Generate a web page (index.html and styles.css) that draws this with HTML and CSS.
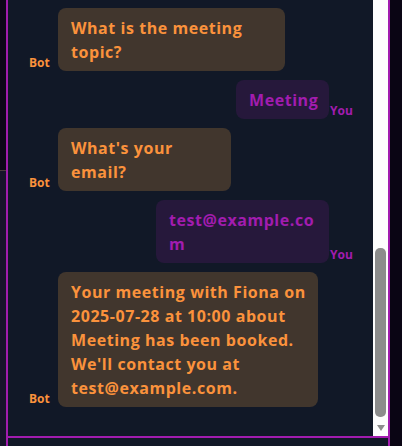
FILE: index.html
```html
<!DOCTYPE html>
<html lang="en">
<head>
<meta charset="utf-8">
<title>Chat</title>
<link rel="stylesheet" href="styles.css">
</head>
<body>
<div class="app">
  <aside class="side-left">
    <div class="side-top"></div>
    <div class="side-bottom"></div>
  </aside>
  <main class="panel">
    <div class="chat-body">
      <div class="messages">
        <div class="row row-bot">
          <span class="label label-bot">Bot</span>
          <div class="bubble bubble-bot w-topic">What is the meeting<br>topic?</div>
        </div>
        <div class="row row-you">
          <div class="bubble bubble-you w-meeting">Meeting</div>
          <span class="label label-you">You</span>
        </div>
        <div class="row row-bot">
          <span class="label label-bot">Bot</span>
          <div class="bubble bubble-bot w-email">What's your<br>email?</div>
        </div>
        <div class="row row-you">
          <div class="bubble bubble-you w-address">test@example.co<br>m</div>
          <span class="label label-you">You</span>
        </div>
        <div class="row row-bot">
          <span class="label label-bot">Bot</span>
          <div class="bubble bubble-bot w-confirm">Your meeting with Fiona on<br>2025-07-28 at 10:00 about<br>Meeting has been booked.<br>We'll contact you at<br>test@example.com.</div>
        </div>
      </div>
      <div class="scrollbar">
        <div class="thumb"></div>
        <div class="arrow"><span class="arrow-down"></span></div>
      </div>
    </div>
    <div class="composer"></div>
  </main>
  <aside class="side-right"></aside>
</div>
</body>
</html>
```

FILE: styles.css
```css
* { box-sizing: border-box; }
html, body { margin: 0; padding: 0; }
body {
  background: #0b0617;
  font-family: "Open Sans", "Noto Sans", sans-serif;
  height: 446px;
  overflow: hidden;
}
.app {
  display: flex;
  height: 446px;
}
.side-left {
  width: 6px;
  display: flex;
  flex-direction: column;
}
.side-top {
  height: 171px;
  background: #0d0719;
  border-bottom: 1px solid #4a3c3c;
}
.side-bottom {
  flex: 1;
  background: #17142b;
}
.panel {
  width: 384px;
  border-left: 2px solid #a21caf;
  border-right: 2px solid #a21caf;
  background: #111827;
  display: flex;
  flex-direction: column;
}
.chat-body {
  height: 436px;
  display: flex;
}
.messages {
  flex: 1;
  display: flex;
  flex-direction: column;
  justify-content: flex-end;
  gap: 9px;
  padding: 0 21px 29px 21px;
  overflow: hidden;
}
.row {
  display: flex;
  align-items: flex-end;
}
.row-bot { gap: 8px; }
.row-you { justify-content: flex-end; gap: 1px; }
.label {
  font-size: 12px;
  font-weight: 700;
  line-height: 15px;
  margin-bottom: 1px;
  white-space: nowrap;
}
.label-bot { color: #fb923c; width: 21px; }
.label-you { color: #a21caf; width: 22px; }
.bubble {
  font-size: 16px;
  font-weight: 700;
  line-height: 24px;
  letter-spacing: 0.55px;
  padding: 7.5px 12px 7.5px 13px;
  border-radius: 8px;
  white-space: nowrap;
}
.bubble-bot {
  background: #41362d;
  color: #fb923c;
}
.bubble-you {
  background: #26183b;
  color: #a21caf;
}
.w-topic { width: 227px; }
.w-meeting { width: 93px; }
.w-email { width: 173px; }
.w-address { width: 173px; }
.w-confirm { width: 260px; }
.scrollbar {
  width: 15px;
  background: #fdfdfd;
  display: flex;
  flex-direction: column;
  justify-content: flex-end;
}
.thumb {
  height: 169px;
  margin: 0 2px 0 2px;
  border-radius: 5px;
  background: #8c8c8c;
}
.arrow {
  height: 19px;
  display: flex;
  justify-content: center;
  padding-top: 8px;
}
.arrow-down {
  width: 0;
  height: 0;
  border-left: 4.5px solid transparent;
  border-right: 4.5px solid transparent;
  border-top: 6px solid #8c8c8c;
}
.composer {
  flex: 1;
  border-top: 2px solid #a21caf;
  background: #111827;
}
.side-right {
  flex: 1;
  background: #0a0514;
}
```
